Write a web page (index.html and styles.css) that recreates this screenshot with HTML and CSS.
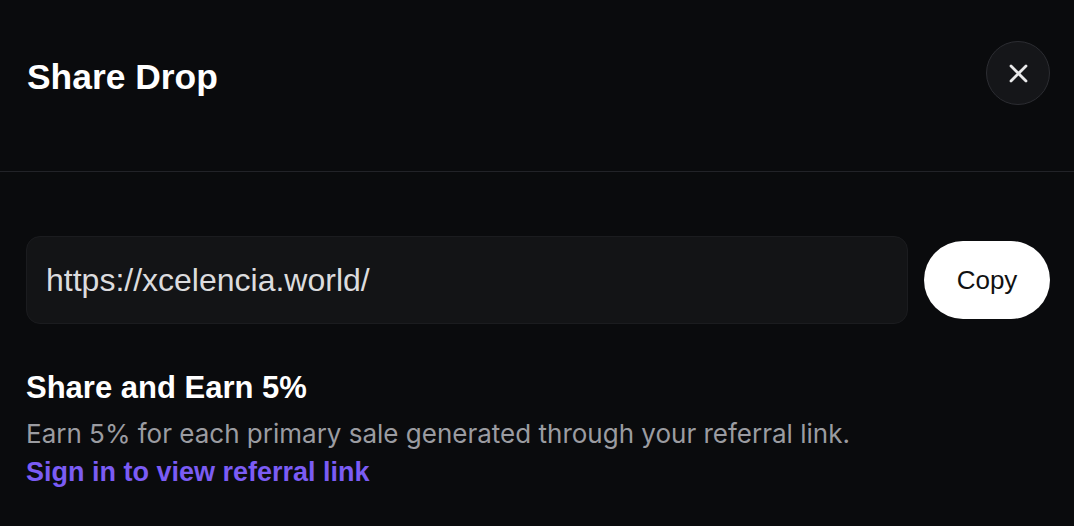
FILE: index.html
```html
<!DOCTYPE html>
<html lang="en">
<head>
    <meta charset="UTF-8">
    <meta name="viewport" content="width=device-width, initial-scale=1.0">
    <title>Share Drop</title>
    <link rel="stylesheet" href="styles.css">
</head>
<body>
    <div class="modal">
        <div class="modal-header">
            <h1 class="modal-title">Share Drop</h1>
            <button class="close-btn" aria-label="Close">
                <svg width="19" height="19" viewBox="0 0 19 19">
                    <path d="M2 2 L17 17 M17 2 L2 17" stroke="#e9e9ea" stroke-width="2.8" stroke-linecap="round"/>
                </svg>
            </button>
        </div>

        <div class="modal-body">
            <div class="link-row">
                <div class="link-box">https://xcelencia.world/</div>
                <button class="copy-btn">Copy</button>
            </div>

            <h2 class="earn-title">Share and Earn 5%</h2>
            <p class="earn-text">Earn 5% for each primary sale generated through your referral link.</p>
            <a class="earn-link">Sign in to view referral link</a>
        </div>
    </div>
</body>
</html>
```

FILE: styles.css
```css
body {
    margin: 0;
    background-color: #0a0b0d;
    font-family: "Liberation Sans", Arial, sans-serif;
    color: #fff;
}

.modal {
    width: 1074px;
    height: 526px;
    overflow: hidden;
}

.modal-header {
    display: flex;
    align-items: center;
    justify-content: space-between;
    padding: 41px 24px 66px 27px;
    border-bottom: 1px solid #222328;
}

.modal-title {
    margin: 7px 0 0 0;
    font-size: 35.4px;
    line-height: 40px;
    font-weight: 700;
}

.close-btn {
    width: 64px;
    height: 64px;
    border-radius: 50%;
    border: 1px solid #2c2d32;
    background-color: #151619;
    display: flex;
    align-items: center;
    justify-content: center;
    padding: 0;
    cursor: pointer;
}

.modal-body {
    padding: 64px 24px 0 26px;
}

.link-row {
    display: flex;
    align-items: center;
    gap: 16px;
}

.link-box {
    flex: 1;
    height: 88px;
    box-sizing: border-box;
    display: flex;
    align-items: center;
    padding-left: 19px;
    background-color: #131416;
    border: 1px solid #1b1c1f;
    border-radius: 14px;
    font-size: 32px;
    color: #dcdcde;
}

.copy-btn {
    width: 126px;
    height: 78px;
    border: none;
    border-radius: 39px;
    background-color: #fff;
    color: #111;
    font-family: "Liberation Sans", Arial, sans-serif;
    font-size: 26px;
    cursor: pointer;
}

.earn-title {
    margin: 46px 0 8px 0;
    font-size: 31px;
    line-height: 36px;
    font-weight: 700;
}

.earn-text {
    margin: 0;
    font-family: Inter, "Liberation Sans", sans-serif;
    font-size: 26px;
    line-height: 39px;
    color: #9b9ca1;
}

.earn-link {
    display: block;
    font-size: 27px;
    line-height: 39px;
    font-weight: 700;
    color: #7b5cf4;
    cursor: pointer;
}
```
